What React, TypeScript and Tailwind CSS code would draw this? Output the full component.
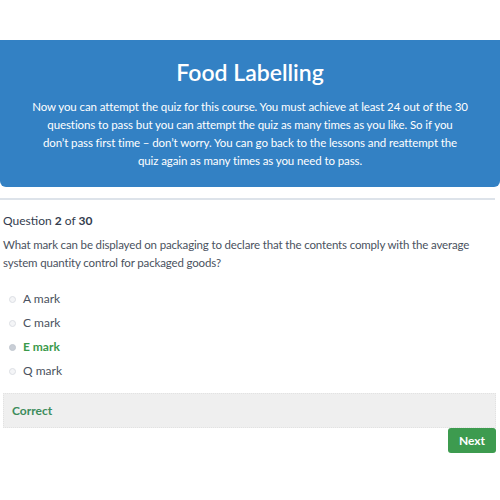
export default function App() {
  const options = ['A mark', 'C mark', 'E mark', 'Q mark'];

  return (
    <div className="w-[500px] h-[500px] bg-white font-['Lato',sans-serif] overflow-hidden">
      <div className="h-10" />
      <div className="bg-[#3381c4] rounded-b-[6px] px-3 pt-[17px] pb-[17px] text-center text-white">
        <h1 className="text-[23px] leading-[30px] font-semibold">Food Labelling</h1>
        <p className="mt-[11px] text-[11.5px] tracking-[-0.1px] leading-[18px]">
          Now you can attempt the quiz for this course. You must achieve at least 24 out of the 30
          <br />
          questions to pass but you can attempt the quiz as many times as you like. So if you
          <br />
          don’t pass first time – don’t worry. You can go back to the lessons and reattempt the
          <br />
          quiz again as many times as you need to pass.
        </p>
      </div>
      <div className="mt-[11px] mr-[5px] h-[2px] bg-[#dde3ea]" />

      <div className="px-[3px]">
        <p className="mt-[12px] text-[12px] leading-[18px] text-[#333c4e]">
          Question <span className="font-bold">2</span> of <span className="font-bold">30</span>
        </p>
        <p className="mt-[6px] text-[11.5px] tracking-[-0.15px] leading-[18px] text-[#4a5260]">
          What mark can be displayed on packaging to declare that the contents comply with the average system quantity control for packaged goods?
        </p>

        <ul className="mt-[18px] flex flex-col gap-[6px]">
          {options.map((o) => {
            const right = o === 'E mark';
            return (
              <li key={o} className="flex items-center h-[18px]">
                <span
                  className={
                    'ml-[6px] w-[7px] h-[7px] rounded-full border ' +
                    (right ? 'bg-[#c9ced6] border-[#c2c8d0]' : 'bg-[#f4f5f7] border-[#dcdfe4]')
                  }
                />
                <span
                  className={
                    'ml-[7px] text-[12px] leading-[18px] ' +
                    (right ? 'text-[#3b9a4b] font-bold' : 'text-[#4a5260]')
                  }
                >
                  {o}
                </span>
              </li>
            );
          })}
        </ul>

        <div className="mt-[13px] mr-[1px] h-[35px] bg-[#efefef] border border-dotted border-[#e2e2e2] flex items-center px-[8px]">
          <span className="text-[12px] font-bold text-[#3c8c5c]">Correct</span>
        </div>
        <div className="flex justify-end mr-[1px]">
          <button className="w-[48px] h-[25px] rounded-[3px] bg-[#3d9b4f] text-white text-[12px] font-bold">
            Next
          </button>
        </div>
      </div>
    </div>
  );
}
